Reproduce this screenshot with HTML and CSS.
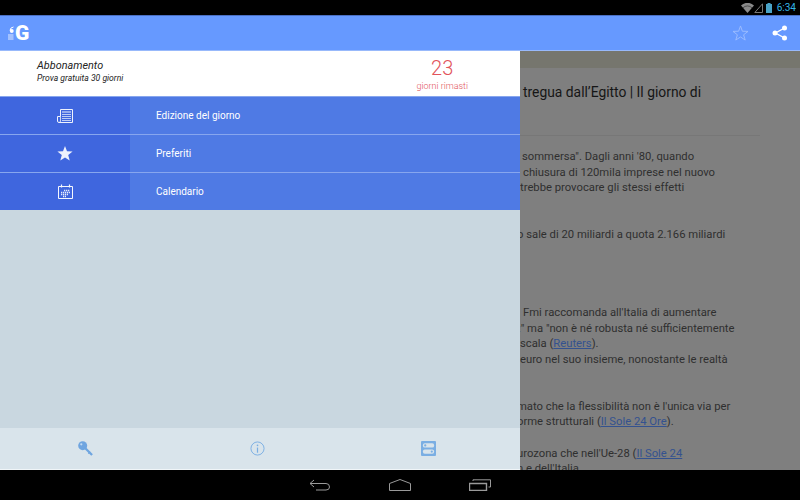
FILE: index.html
```html
<!DOCTYPE html>
<html lang="en">
<head>
    <meta charset="UTF-8">
    <meta name="viewport" content="width=device-width, initial-scale=1.0">
    <title>Giornale</title>
    <link rel="stylesheet" href="styles.css">
</head>
<body>

    <!-- Android status bar -->
    <div class="status-bar">
        <svg class="signal-icon" width="13" height="10" viewBox="0 0 13 10">
            <path d="M0 2.6 A9 9 0 0 1 13 2.6 L6.5 10 Z" fill="#8a8a8a"/>
            <path d="M2 4.8 A6.4 6.4 0 0 1 11 4.8" fill="none" stroke="#333" stroke-width="0.7"/>
        </svg>
        <svg class="signal-icon" width="9" height="10" viewBox="0 0 9 10">
            <path d="M8.5 0.8 V9.5 H0.8 Z" fill="none" stroke="#777" stroke-width="1"/>
        </svg>
        <svg class="battery" width="6" height="10" viewBox="0 0 6 10">
            <rect x="1.5" y="0" width="3" height="1" fill="#4aa3c7"/>
            <rect x="0" y="1" width="6" height="9" fill="#4aa3c7"/>
        </svg>
        <span class="clock">6:34</span>
    </div>

    <!-- Action bar -->
    <div class="action-bar">
        <div class="logo">
            <svg width="8" height="15" viewBox="0 0 8 15">
                <circle cx="4.8" cy="5" r="1.9" fill="#fff"/>
                <path d="M3 4.5 Q3.2 1.4 6.5 1" fill="none" stroke="#fff" stroke-width="1"/>
                <path d="M1 9 H6.5 M1 11 H6.5 M1 13 H6.5" stroke="#fff" stroke-width="0.8"/>
            </svg>
            <span class="logo-letter">G</span>
        </div>
        <div class="action-icons">
            <svg width="17" height="16" viewBox="0 0 18 17">
                <path d="M9 1 L11 6.6 L17 6.8 L12.3 10.4 L14 16 L9 12.7 L4 16 L5.7 10.4 L1 6.8 L7 6.6 Z" fill="none" stroke="#9dbdff" stroke-width="1"/>
            </svg>
            <svg width="16" height="16" viewBox="0 0 16 16">
                <path d="M12.5 3 L3.5 8 L12.5 13" fill="none" stroke="#fff" stroke-width="1.4"/>
                <circle cx="12.5" cy="3" r="2.5" fill="#fff"/>
                <circle cx="3" cy="8" r="2.5" fill="#fff"/>
                <circle cx="12.5" cy="13" r="2.5" fill="#fff"/>
            </svg>
        </div>
    </div>

    <div class="main">
        <!-- Dimmed article behind the drawer -->
        <div class="article-top"></div>
        <div class="article">
            <h1 class="article-title">tregua dall’Egitto | Il giorno di</h1>
            <div class="article-rule"></div>
            <div class="block first">
                <p class="at-2">sommersa". Dagli anni '80, quando</p>
                <p class="at-3">chiusura di 120mila imprese nel nuovo</p>
                <p class="at-0">trebbe provocare gli stessi effetti</p>
            </div>
            <div class="block second">
                <p class="at-m3">o sale di 20 miliardi a quota 2.166 miliardi</p>
            </div>
            <div class="block third">
                <p class="at-3">Fmi raccomanda all'Italia di aumentare</p>
                <p class="at-m2">:" ma "non è né robusta né sufficientemente</p>
                <p class="at-0">scala (<a href="#">Reuters</a>).</p>
                <p class="at-0">euro nel suo insieme, nonostante le realtà</p>
            </div>
            <div class="block fourth">
                <p class="at-m3">mato che la flessibilità non è l'unica via per</p>
                <p class="at-m3">orme strutturali (<a href="#">Il Sole 24 Ore</a>).</p>
            </div>
            <div class="block fifth">
                <p class="at-m3">urozona che nell'Ue-28 (<a href="#">Il Sole 24</a></p>
                <p class="at-m3">n e dell'Italia</p>
            </div>
        </div>

        <!-- Navigation drawer -->
        <div class="drawer">
            <div class="subscription">
                <div class="subscription-info">
                    <div class="subscription-title">Abbonamento</div>
                    <div class="subscription-note">Prova gratuita 30 giorni</div>
                </div>
                <div class="days-left">
                    <div class="days-number">23</div>
                    <div class="days-label">giorni rimasti</div>
                </div>
            </div>

            <div class="menu-row">
                <div class="menu-icon">
                    <svg width="16" height="14" viewBox="0 0 16 14">
                        <path d="M3.5 0.5 H15.5 V13.5 H2 Q0.5 13.5 0.5 12 V7.5 H3.5 Z" fill="none" stroke="#eef2fd" stroke-width="1"/>
                        <path d="M3.5 7.5 V12 Q3.5 13.5 2 13.5" fill="none" stroke="#eef2fd" stroke-width="0.8"/>
                        <path d="M5 3 H14" stroke="#eef2fd" stroke-width="1"/>
                        <path d="M5 5.5 H14 M5 7.5 H14 M5 9.5 H14 M5 11.5 H14" stroke="#ccd8f7" stroke-width="0.9"/>
                    </svg>
                </div>
                <div class="menu-label">Edizione del giorno</div>
            </div>
            <div class="menu-row">
                <div class="menu-icon">
                    <svg width="16" height="15" viewBox="0 0 16 15">
                        <path d="M8 0 L10 5.3 L15.6 5.6 L11.2 9.1 L12.7 14.6 L8 11.5 L3.3 14.6 L4.8 9.1 L0.4 5.6 L6 5.3 Z" fill="#eef2fd"/>
                    </svg>
                </div>
                <div class="menu-label">Preferiti</div>
            </div>
            <div class="menu-row">
                <div class="menu-icon">
                    <svg width="15" height="15" viewBox="0 0 15 15">
                        <path d="M0.5 2.5 H14.5 V14.5 H0.5 Z" fill="none" stroke="#f4f7fe" stroke-width="1"/>
                        <path d="M3.5 0.5 V3.5 M11.5 0.5 V3.5" stroke="#f4f7fe" stroke-width="1.2"/>
                        <path d="M6 6.5 H12 M3 8.5 H12 M3 10.5 H10 M5 12.5 H8" stroke="#e6ecfc" stroke-width="1.3" stroke-dasharray="1.3 0.7"/>
                    </svg>
                </div>
                <div class="menu-label">Calendario</div>
            </div>

            <div class="drawer-space"></div>

            <div class="drawer-footer">
                <svg width="15" height="15" viewBox="0 0 16 16">
                    <circle cx="5" cy="5" r="4.8" fill="#6fa5e0"/>
                    <path d="M7 7 L15 15" stroke="#6fa5e0" stroke-width="2.4"/>
                    <path d="M11 13.5 L13 11.5" stroke="#6fa5e0" stroke-width="1.4"/>
                    <circle cx="3.5" cy="3.5" r="1.2" fill="#c3daf0"/>
                </svg>
                <svg width="15" height="15" viewBox="0 0 16 16">
                    <circle cx="8" cy="8" r="7" fill="none" stroke="#7aaee3" stroke-width="1"/>
                    <path d="M8 7 V12.5" stroke="#7aaee3" stroke-width="1.3"/>
                    <circle cx="8" cy="4.6" r="0.9" fill="#7aaee3"/>
                </svg>
                <svg width="15" height="15" viewBox="0 0 16 16">
                    <rect width="16" height="16" rx="1" fill="#7aaee3"/>
                    <rect x="2" y="2.5" width="12" height="4.5" rx="2" fill="#d9e4eb"/>
                    <rect x="2" y="9" width="12" height="4.5" rx="2" fill="#d9e4eb"/>
                    <circle cx="4.5" cy="4.7" r="1.2" fill="#7aaee3"/>
                    <circle cx="11.5" cy="11.2" r="1.2" fill="#7aaee3"/>
                </svg>
            </div>
        </div>
    </div>

    <!-- Android navigation bar -->
    <div class="nav-bar">
        <svg width="22" height="12" viewBox="0 0 22 12">
            <path d="M5 1 L1 4.5 L5 8 M1 4.5 H17 Q20.5 4.5 20.5 8 Q20.5 11 17 11 H7" fill="none" stroke="#9a9a9a" stroke-width="1"/>
        </svg>
        <svg width="22" height="12" viewBox="0 0 22 12">
            <path d="M0.5 11.5 V4.5 L11 0.5 L21.5 4.5 V11.5 Z" fill="none" stroke="#9a9a9a" stroke-width="1"/>
        </svg>
        <svg width="22" height="12" viewBox="0 0 22 12">
            <path d="M0.5 4.5 H17.5 V11.5 H0.5 Z" fill="none" stroke="#9a9a9a" stroke-width="1.4"/>
            <path d="M4 2 V0.8 H21.5 V8 H19.5" fill="none" stroke="#9a9a9a" stroke-width="1"/>
        </svg>
    </div>

</body>
</html>
```

FILE: styles.css
```css
* {
    box-sizing: border-box;
}

html, body {
    margin: 0;
    height: 100%;
}

body {
    font-family: Roboto, "Liberation Sans", sans-serif;
    display: flex;
    flex-direction: column;
    width: 800px;
    height: 500px;
    overflow: hidden;
    background-color: #000;
}

.status-bar {
    height: 15px;
    background-color: #000;
    display: flex;
    align-items: center;
    justify-content: flex-end;
    padding-right: 4px;
}

.battery {
    margin-left: 3px;
    margin-right: 5px;
}

.clock {
    color: #33b5e5;
    font-size: 10px;
    line-height: 15px;
}

.action-bar {
    height: 36px;
    background-color: #6699ff;
    border-top: 1px solid #4a6fc2;
    border-bottom: 1px solid #98b9fb;
    display: flex;
    align-items: center;
    justify-content: space-between;
    padding: 0 12px 0 7px;
}

.logo {
    display: flex;
    align-items: center;
    color: #fff;
}

.logo-letter {
    font-size: 21px;
    font-weight: 900;
    line-height: 24px;
}

.action-icons {
    display: flex;
    align-items: center;
    gap: 23px;
}

.main {
    position: relative;
    flex: 1;
    overflow: hidden;
    background-color: #7f7f7f;
}

.article-top {
    height: 17px;
    background-color: #76766e;
}

.article {
    padding-left: 520px;
    color: #2f2f2f;
    font-size: 11.25px;
}

.article p {
    margin: 0;
    line-height: 15.7px;
    white-space: nowrap;
}

.article a {
    color: #34528f;
}

.article-title {
    margin: 15px 0 0 3px;
    font-size: 13.85px;
    font-weight: 400;
    line-height: 18px;
    color: #161616;
}

.article-rule {
    height: 1px;
    margin-top: 34px;
    margin-right: 40px;
    background-color: #777777;
}

.block.first {
    margin-top: 13px;
}

.block.second {
    margin-top: 31px;
}

.block.third {
    margin-top: 62px;
}

.block.fourth {
    margin-top: 31px;
}

.block.fifth {
    margin-top: 15.5px;
}

.at-0 { text-indent: 0; }
.at-2 { text-indent: 2px; }
.at-3 { text-indent: 3px; }
.at-m2 { text-indent: -2px; }
.at-m3 { text-indent: -3px; }

.drawer {
    position: absolute;
    top: 0;
    left: 0;
    bottom: 0;
    width: 520px;
    display: flex;
    flex-direction: column;
    background-color: #c9d7e0;
}

.subscription {
    height: 45px;
    background-color: #fff;
    display: flex;
    align-items: center;
    justify-content: space-between;
    padding: 0 52px 0 37px;
}

.subscription-info {
    margin-bottom: 5px;
}

.subscription-title {
    font-size: 10.85px;
    font-style: italic;
    line-height: 15px;
    color: #222;
}

.subscription-note {
    font-size: 8.6px;
    font-style: italic;
    line-height: 11px;
    color: #222;
}

.days-left {
    text-align: center;
    color: #e2545b;
}

.days-number {
    font-size: 20px;
    font-weight: 300;
    line-height: 24px;
    margin-top: 2px;
}

.days-label {
    font-size: 9px;
    font-weight: 300;
    line-height: 13px;
}

.menu-row {
    height: 38px;
    display: flex;
    border-top: 1px solid #87a6ee;
    background-color: #4f7ae4;
    color: #fff;
}

.menu-icon {
    width: 130px;
    background-color: #3f66de;
    display: flex;
    align-items: center;
    justify-content: center;
}

.menu-label {
    padding-left: 26px;
    font-size: 10px;
    line-height: 37px;
}

.drawer-space {
    flex: 1;
}

.drawer-footer {
    height: 42px;
    background-color: #d9e4eb;
    border-bottom: 1px solid #f0f5f8;
    display: flex;
    align-items: center;
    justify-content: space-between;
    padding: 0 84px 0 78px;
}

.nav-bar {
    height: 30px;
    background-color: #000;
    display: flex;
    align-items: center;
    justify-content: center;
    gap: 58px;
}
```
